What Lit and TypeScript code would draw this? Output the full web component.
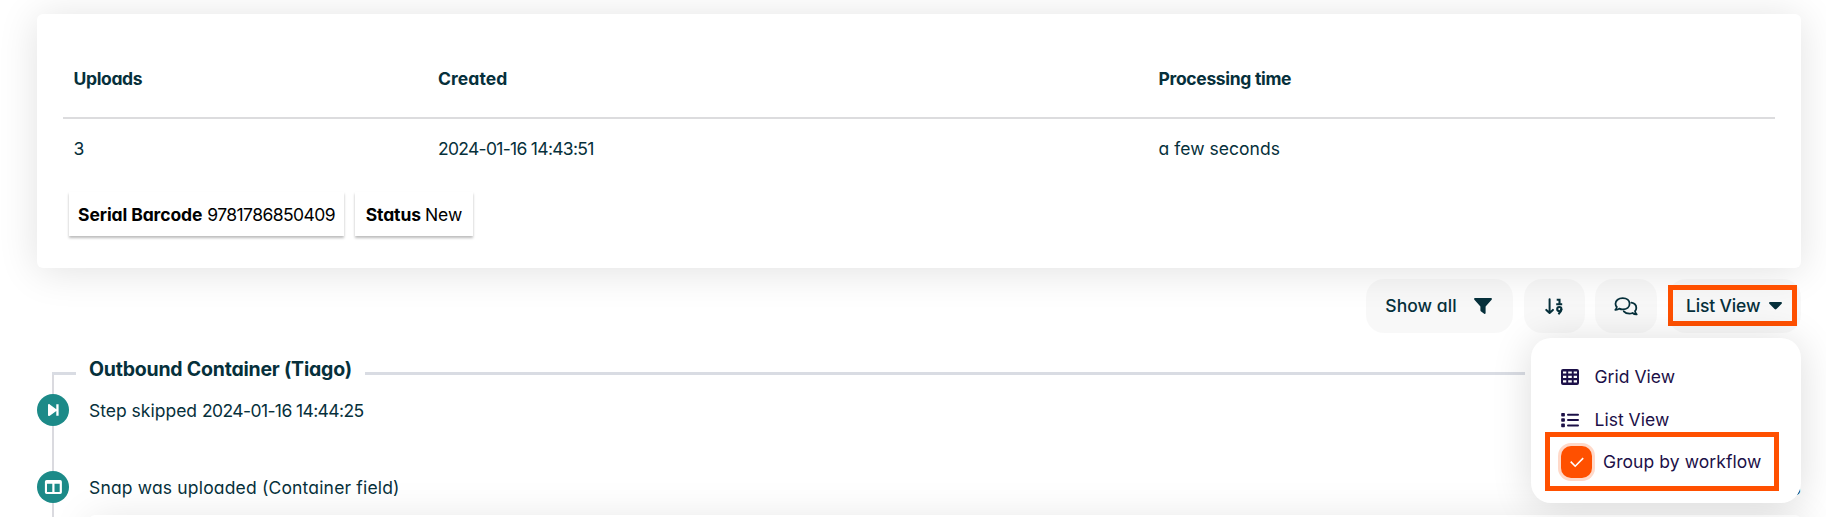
import { LitElement, html, css, svg } from "lit";
import { customElement } from "lit/decorators.js";

const funnel = svg`<svg width="18" height="16" viewBox="0 0 18 16"><path fill="currentColor" d="M1.1 0H16.9C17.8 0 18.2 1 17.6 1.7L11.6 8.6V15C11.6 15.9 10.8 16.2 10.2 15.8L7.1 13.5C6.6 13.1 6.4 12.8 6.4 12.2V8.6L.4 1.7C-.2 1 .2 0 1.1 0Z"/></svg>`;

const sortIcon = svg`<svg width="18" height="17" viewBox="0 0 18 17" fill="none" stroke="currentColor"><path stroke-width="2" stroke-linecap="round" stroke-linejoin="round" d="M4.6 1.2V14.8M1.3 11.9L4.6 15L7.9 11.9"/><path stroke-width="2.1" d="M11.7 1.7H14.5V6.2M11.2 6.2H17.2"/><circle cx="14.3" cy="11.1" r="2.1" stroke-width="2.1"/><path stroke-width="2.1" d="M16.4 11.1C16.4 13.3 15.1 14.7 13.4 16.2"/></svg>`;

const chatIcon = svg`<svg width="24" height="19" viewBox="0 0 24 19" fill="none" stroke="currentColor" stroke-width="1.8" stroke-linejoin="round" stroke-linecap="round"><path d="M8.7 1.2C12.9 1.2 15.6 3.6 15.6 6.8S12.9 12.4 8.7 12.4C7.4 12.4 6.3 12.1 5.3 11.6C4.2 12.5 2.8 12.9 1.3 12.8C2.1 12 2.7 11 2.8 10C1.9 9.1 1.5 8 1.5 6.8C1.5 3.6 4.5 1.2 8.7 1.2Z"/><path d="M17.3 5.7C20.3 6.2 22.3 8.2 22.3 11C22.3 12.3 21.8 13.4 21 14.2C21.2 15.3 21.8 16.4 22.7 17.3C21 17.4 19.6 16.9 18.5 16C17.6 16.4 16.7 16.6 15.6 16.6C13.1 16.6 11 15.7 9.8 14.3"/></svg>`;

const gridIcon = svg`<svg width="18" height="16" viewBox="0 0 18 16"><path fill="currentColor" fill-rule="evenodd" d="M2 0H16A2 2 0 0 1 18 2V14A2 2 0 0 1 16 16H2A2 2 0 0 1 0 14V2A2 2 0 0 1 2 0ZM2 2.4V4.6H5.3V2.4ZM7.2 2.4V4.6H10.8V2.4ZM12.7 2.4V4.6H16V2.4ZM2 6.7V9.1H5.3V6.7ZM7.2 6.7V9.1H10.8V6.7ZM12.7 6.7V9.1H16V6.7ZM2 11.2V13.6H5.3V11.2ZM7.2 11.2V13.6H10.8V11.2ZM12.7 11.2V13.6H16V11.2Z"/></svg>`;

const listIcon = svg`<svg width="18" height="16" viewBox="0 0 18 16"><g fill="currentColor"><rect x=".2" y=".9" width="3.7" height="3.6" rx=".8"/><rect x=".2" y="6.2" width="3.7" height="3.6" rx=".8"/><rect x=".2" y="11.6" width="3.7" height="3.6" rx=".8"/><rect x="6" y="1.7" width="12" height="2" rx="1"/><rect x="6" y="7" width="12" height="2" rx="1"/><rect x="6" y="12.4" width="12" height="2" rx="1"/></g></svg>`;

const checkIcon = svg`<svg width="14" height="11" viewBox="0 0 14 11"><path d="M.7 4.6L5.2 9.2L13.2 1.1" fill="none" stroke="#fff" stroke-width="1.6"/></svg>`;

const skipIcon = svg`<svg width="32" height="32" viewBox="0 0 32 32"><path fill="#fff" d="M11 11.3C11 10.2 12 9.8 12.8 10.4L19.3 15.3V10.3H21.6V21.8H19.3V17L12.8 21.8C12 22.4 11 22 11 20.9Z"/></svg>`;

const columnsIcon = svg`<svg width="32" height="32" viewBox="0 0 32 32"><path fill="#fff" fill-rule="evenodd" d="M9.6 9H23.2A1.7 1.7 0 0 1 24.9 10.7V21.3A1.7 1.7 0 0 1 23.2 23H9.6A1.7 1.7 0 0 1 7.9 21.3V10.7A1.7 1.7 0 0 1 9.6 9ZM10 12.8V20.9H15.3V12.8ZM17.5 12.8V20.9H22.7V12.8Z"/></svg>`;

@customElement("app-root")
export class AppRoot extends LitElement {
  static styles = css`
    :host {
      display: block;
      position: relative;
      box-sizing: border-box;
      height: 517px;
      overflow: hidden;
      padding: 14px 25px 0 37px;
      background: #fff;
      color: #06303b;
      font: 400 17.5px/24px Inter, "Open Sans", sans-serif;
      font-feature-settings: "cv11";
    }
    svg { display: block; flex: none; }
    .card {
      box-sizing: border-box;
      height: 254px;
      padding: 36px 26px 0;
      border-radius: 6px;
      background: #fff;
      box-shadow: 0 3px 40px rgba(0, 0, 0, 0.12);
    }
    .row {
      display: grid;
      grid-template-columns: 364.5px 720.5px 1fr;
      padding-left: 10.5px;
    }
    .head {
      box-sizing: border-box;
      height: 69px;
      padding-top: 17px;
      font-weight: 700;
      border-bottom: 2px solid #dcdcde;
    }
    .values { padding-top: 18px; }
    .uploads { letter-spacing: -0.35px; }
    .created { letter-spacing: 0.1px; }
    .processing { letter-spacing: -0.32px; }
    .date { letter-spacing: -0.7px; }
    .few { letter-spacing: 0.04px; }
    .tags { display: flex; gap: 11px; margin: 31px 0 0 6px; }
    .tag {
      box-sizing: border-box;
      display: flex;
      align-items: center;
      justify-content: center;
      gap: 5px;
      height: 44px;
      width: 275px;
      padding-top: 1px;
      color: #000;
      box-shadow: 0 1.5px 2.5px rgba(0, 0, 0, 0.27);
      white-space: nowrap;
    }
    .tag b { letter-spacing: -0.1px; }
    .tag.status { width: 118px; gap: 4px; }
    .digits { letter-spacing: -0.58px; }
    .toolbar {
      position: relative;
      display: flex;
      justify-content: flex-end;
      margin-top: 11px;
      height: 54px;
      font-weight: 500;
    }
    .btn {
      box-sizing: border-box;
      display: flex;
      align-items: center;
      justify-content: center;
      border-radius: 18px;
      background: rgba(0, 0, 0, 0.028);
      width: 61px;
      margin-right: 10px;
      padding-right: 1px;
      white-space: nowrap;
    }
    .all {
      width: 147px;
      gap: 17px;
      margin-right: 11px;
      padding-right: 2px;
      letter-spacing: 0.05px;
    }
    .chat { width: 62px; margin-right: 11px; }
    .view {
      width: 133px;
      margin: 0;
      justify-content: flex-start;
      padding-left: 18px;
      gap: 9px;
      letter-spacing: -0.15px;
    }
    .mark {
      position: absolute;
      box-sizing: border-box;
      border: 5px solid #ff5000;
    }
    .mark.top { top: 6px; right: 4px; width: 129px; height: 41px; }
    .timeline { display: grid; grid-template-columns: 32px 1fr; }
    .rail {
      display: flex;
      flex-direction: column;
      align-items: center;
      padding-top: 39px;
    }
    .line { width: 2px; background: #dadadf; }
    .l1 { height: 22px; }
    .l2 { height: 45px; }
    .l3 { height: 14px; }
    .node { width: 32px; height: 32px; border-radius: 50%; background: #1c8a88; }
    .events { white-space: nowrap; min-width: 0; }
    .heading { display: flex; height: 51px; align-items: flex-start; margin-left: -17px; }
    .stub { width: 24px; height: 3px; margin-top: 39px; background: #d9dce3; }
    .title {
      box-sizing: border-box;
      width: 289px;
      margin-top: 24px;
      padding-left: 13px;
      font-size: 19.5px;
      font-weight: 700;
      letter-spacing: -0.22px;
    }
    .rule { width: 1160px; height: 3px; margin-top: 39px; background: #d9dce3; }
    .event { margin-left: 20px; height: 24px; margin-top: 15px; display: flex; justify-content: space-between; }
    .event.snap { margin-top: 53px; letter-spacing: 0.17px; }
    .index { letter-spacing: 0; padding-top: 1px; }
    .step { letter-spacing: 0; }
    .step .date { letter-spacing: -0.6px; }
    .detail {
      margin: 15px 0 0 20px;
      height: 60px;
      border-radius: 6px;
      background: #fff;
      box-shadow: 0 3px 40px rgba(0, 0, 0, 0.1);
    }
    .menu {
      position: absolute;
      top: 338px;
      right: 25px;
      box-sizing: border-box;
      width: 270px;
      height: 165px;
      padding: 27px 0 0 30px;
      border-radius: 20px;
      background: #fff;
      color: #1c1048;
      box-shadow: 0 3px 40px rgba(0, 0, 0, 0.14);
      white-space: nowrap;
    }
    .item { display: flex; align-items: center; height: 24px; gap: 15.5px; margin-bottom: 19px; letter-spacing: 0.02px; }
    .item.group { height: 32px; gap: 11px; margin-top: -5px; letter-spacing: 0.08px; }
    .check {
      display: flex;
      align-items: center;
      justify-content: center;
      width: 31px;
      height: 32px;
      border-radius: 10px;
      background: #ff5000;
      box-shadow: 0 0 0 3px #ffd9c9;
    }
    .mark.bottom { left: 14px; top: 94px; width: 234px; height: 59px; }
  `;

  render() {
    return html`
      <section class="card">
        <div class="row head">
          <span class="uploads">Uploads</span><span class="created">Created</span><span class="processing">Processing time</span>
        </div>
        <div class="row values">
          <span>3</span><span class="date">2024-01-16 14:43:51</span><span class="few">a few seconds</span>
        </div>
        <div class="tags">
          <div class="tag"><b>Serial Barcode</b><span class="digits">9781786850409</span></div>
          <div class="tag status"><b>Status</b><span>New</span></div>
        </div>
      </section>
      <div class="toolbar">
        <div class="btn all"><span>Show all</span>${funnel}</div>
        <div class="btn">${sortIcon}</div>
        <div class="btn chat">${chatIcon}</div>
        <div class="btn view">
          <span>List View</span>
          <svg width="13" height="8" viewBox="0 0 13 8"><path fill="currentColor" d="M1.2 0H11.8C12.9 0 13.3 1.1 12.6 1.8L7.4 7C6.8 7.6 6.2 7.6 5.6 7L.4 1.8C-.3 1.1 .1 0 1.2 0Z"/></svg>
        </div>
        <div class="mark top"></div>
      </div>
      <div class="timeline">
        <div class="rail">
          <div class="line l1"></div>
          <div class="node">${skipIcon}</div>
          <div class="line l2"></div>
          <div class="node">${columnsIcon}</div>
          <div class="line l3"></div>
        </div>
        <div class="events">
          <div class="heading">
            <div class="stub"></div>
            <div class="title">Outbound Container (Tiago)</div>
            <div class="rule"></div>
          </div>
          <div class="event step"><span>Step skipped <span class="date">2024-01-16 14:44:25</span></span></div>
          <div class="event snap"><span>Snap was uploaded (Container field)</span><span class="index">5</span></div>
          <div class="detail"></div>
        </div>
      </div>
      <div class="menu">
        <div class="item">${gridIcon}<span>Grid View</span></div>
        <div class="item">${listIcon}<span>List View</span></div>
        <div class="item group"><span class="check">${checkIcon}</span><span>Group by workflow</span></div>
        <div class="mark bottom"></div>
      </div>
    `;
  }
}
